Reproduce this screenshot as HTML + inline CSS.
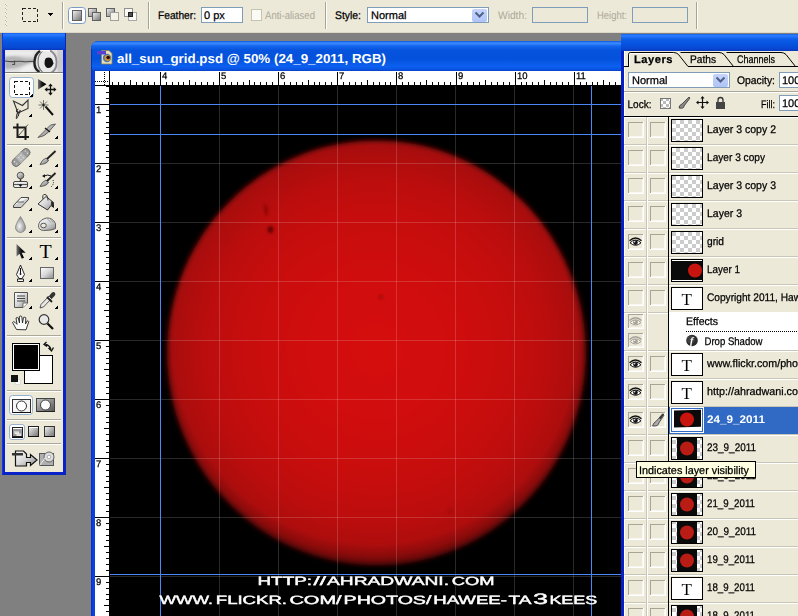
<!DOCTYPE html>
<html><head><meta charset="utf-8"><title>Photoshop</title>
<style>html,body{margin:0;padding:0;background:#808080;overflow:hidden}body{width:798px;height:616px;position:relative}svg{display:block;position:absolute;left:0;top:0}</style>
</head><body>
<svg width="798" height="616" viewBox="0 0 798 616" font-family="Liberation Sans, sans-serif" shape-rendering="crispEdges" text-rendering="geometricPrecision">
<defs>
<linearGradient id="tb" x1="0" y1="0" x2="0" y2="1">
<stop offset="0" stop-color="#1060F0"/><stop offset="0.1" stop-color="#2C7CFF"/><stop offset="0.3" stop-color="#0C5EEA"/><stop offset="0.6" stop-color="#0652DE"/><stop offset="0.85" stop-color="#0848D2"/><stop offset="1" stop-color="#0838C0"/>
</linearGradient>
<linearGradient id="tb2" x1="0" y1="0" x2="0" y2="1">
<stop offset="0" stop-color="#0A58E0"/><stop offset="0.07" stop-color="#3E8EFF"/><stop offset="0.17" stop-color="#1464EE"/><stop offset="0.3" stop-color="#0654DE"/><stop offset="0.6" stop-color="#0452DC"/><stop offset="0.85" stop-color="#0C60F0"/><stop offset="0.95" stop-color="#0A52E2"/><stop offset="1" stop-color="#0840C0"/>
</linearGradient>
<radialGradient id="sun" gradientUnits="userSpaceOnUse" cx="376.5" cy="350" r="212">
<stop offset="0" stop-color="#D5110C"/><stop offset="0.35" stop-color="#D0100B"/><stop offset="0.62" stop-color="#C70F0B"/><stop offset="0.8" stop-color="#BC0E0A"/><stop offset="0.92" stop-color="#AE0C09"/><stop offset="1" stop-color="#A00B08"/>
</radialGradient>
<filter id="sunbl" filterUnits="userSpaceOnUse" x="140" y="110" width="480" height="490"><feGaussianBlur stdDeviation="2.6"/></filter>
<linearGradient id="gbtn" x1="0" y1="0" x2="1" y2="1">
<stop offset="0" stop-color="#F4F4F4"/><stop offset="1" stop-color="#707070"/>
</linearGradient>
<linearGradient id="ddb" x1="0" y1="0" x2="0" y2="1">
<stop offset="0" stop-color="#C6D4FC"/><stop offset="1" stop-color="#B0C4F8"/>
</linearGradient>
<pattern id="chk" x="0" y="0" width="8" height="8" patternUnits="userSpaceOnUse">
<rect width="8" height="8" fill="#fff"/><rect width="4" height="4" fill="#CCC"/><rect x="4" y="4" width="4" height="4" fill="#CCC"/>
</pattern>
<pattern id="chkS" x="660" y="98" width="6" height="6" patternUnits="userSpaceOnUse"><rect width="6" height="6" fill="#fff"/><rect width="3" height="3" fill="#BBB"/><rect x="3" y="3" width="3" height="3" fill="#BBB"/></pattern>
<linearGradient id="hdr" x1="0" y1="0" x2="0" y2="1"><stop offset="0" stop-color="#E4E4E4"/><stop offset="0.5" stop-color="#D0D0D0"/><stop offset="1" stop-color="#E6E6E6"/></linearGradient>
<linearGradient id="arr" x1="0" y1="0" x2="1" y2="0"><stop offset="0" stop-color="#777"/><stop offset="0.5" stop-color="#111"/><stop offset="1" stop-color="#000"/></linearGradient>
<linearGradient id="gbtn2" x1="0" y1="0" x2="1" y2="1"><stop offset="0" stop-color="#FFFFFF"/><stop offset="0.5" stop-color="#D8D8D8"/><stop offset="1" stop-color="#8A8A8A"/></linearGradient>
<linearGradient id="gdk" x1="0" y1="0" x2="1" y2="1"><stop offset="0" stop-color="#C8C8C8"/><stop offset="1" stop-color="#555"/></linearGradient>
<radialGradient id="drop" cx="0.4" cy="0.6" r="0.6"><stop offset="0" stop-color="#F4F4F4"/><stop offset="1" stop-color="#8C8C8C"/></radialGradient>
<radialGradient id="limb" gradientUnits="userSpaceOnUse" cx="376.5" cy="353" r="221" fx="356.5" fy="222"><stop offset="0.915" stop-color="#000" stop-opacity="0"/><stop offset="0.948" stop-color="#000" stop-opacity="0.16"/><stop offset="0.974" stop-color="#000" stop-opacity="0.42"/><stop offset="0.99" stop-color="#000" stop-opacity="0.7"/><stop offset="1" stop-color="#000" stop-opacity="0.9"/></radialGradient>
<clipPath id="hc"><rect x="5" y="50" width="58" height="22"/></clipPath>
<clipPath id="cv"><rect x="110" y="86" width="511" height="530"/></clipPath>
<filter id="bl2" x="-0.5" y="-0.5" width="2" height="2"><feGaussianBlur stdDeviation="1"/></filter>
<filter id="bl" x="-1" y="-1" width="3" height="3"><feGaussianBlur stdDeviation="1.4"/></filter>
</defs>
<rect x="0" y="0" width="798" height="616" fill="#808080" />
<g id="optionsbar">
<rect x="0" y="0" width="798" height="33" fill="#ECE9D8" />
<rect x="0" y="32" width="798" height="1" fill="#DAD7C6" />
<rect x="5" y="4" width="2" height="2" fill="#FFFFFF" />
<rect x="5" y="4" width="1" height="1" fill="#B5B2A2" />
<rect x="6" y="5" width="1" height="1" fill="#B5B2A2" />
<rect x="5" y="8" width="2" height="2" fill="#FFFFFF" />
<rect x="5" y="8" width="1" height="1" fill="#B5B2A2" />
<rect x="6" y="9" width="1" height="1" fill="#B5B2A2" />
<rect x="5" y="12" width="2" height="2" fill="#FFFFFF" />
<rect x="5" y="12" width="1" height="1" fill="#B5B2A2" />
<rect x="6" y="13" width="1" height="1" fill="#B5B2A2" />
<rect x="5" y="16" width="2" height="2" fill="#FFFFFF" />
<rect x="5" y="16" width="1" height="1" fill="#B5B2A2" />
<rect x="6" y="17" width="1" height="1" fill="#B5B2A2" />
<rect x="5" y="20" width="2" height="2" fill="#FFFFFF" />
<rect x="5" y="20" width="1" height="1" fill="#B5B2A2" />
<rect x="6" y="21" width="1" height="1" fill="#B5B2A2" />
<rect x="5" y="24" width="2" height="2" fill="#FFFFFF" />
<rect x="5" y="24" width="1" height="1" fill="#B5B2A2" />
<rect x="6" y="25" width="1" height="1" fill="#B5B2A2" />
<rect x="22.5" y="8.5" width="15" height="13" fill="none" stroke="#222" stroke-dasharray="3 2"/>
<path d="M47 13h6l-3 3z" fill="#000"/>
<rect x="62" y="2" width="1" height="27" fill="#A7A493" />
<rect x="63" y="2" width="1" height="27" fill="#FFFFFF" />
<rect x="68.5" y="7.5" width="17" height="16" rx="3" fill="#FFFFFF" stroke="#7A98C4" shape-rendering="geometricPrecision"/>
<rect x="72.500" y="10.500" width="9" height="10" fill="url(#gbtn)" stroke="#606060"/>
<rect x="88.5" y="8.5" width="8" height="8" fill="url(#gbtn)" stroke="#606060"/>
<rect x="92.5" y="12.5" width="8" height="8" fill="url(#gbtn)" stroke="#606060"/>
<rect x="106.5" y="8.5" width="8" height="8" fill="url(#gbtn)" stroke="#606060"/>
<rect x="110.5" y="12.5" width="8" height="8" fill="#F4F2E6" stroke="#A0A0A0"/>
<rect x="124.5" y="8.5" width="8" height="8" fill="#FBFAF4" stroke="#909090"/>
<rect x="128.5" y="12.5" width="8" height="8" fill="#FBFAF4" stroke="#A8A8A8"/>
<rect x="128.5" y="12.5" width="4" height="4" fill="#505050" stroke="#202020"/>
<rect x="148" y="2" width="1" height="27" fill="#A7A493" />
<rect x="149" y="2" width="1" height="27" fill="#FFFFFF" />
<text x="158" y="19" font-size="11" fill="#000" textLength="38" lengthAdjust="spacingAndGlyphs" stroke="#000" stroke-width="0.25" >Feather:</text>
<rect x="201.5" y="7.5" width="41" height="15" fill="#fff" stroke="#7F9DB9"/>
<text x="204" y="19" font-size="11" fill="#000" stroke="#000" stroke-width="0.25" >0 px</text>
<rect x="251.5" y="9.5" width="10" height="11" fill="#FBFAF5" stroke="#C6C3B0"/>
<text x="265" y="19" font-size="11" fill="#ACA899" textLength="50" lengthAdjust="spacingAndGlyphs" >Anti-aliased</text>
<rect x="325" y="2" width="1" height="27" fill="#A7A493" />
<rect x="326" y="2" width="1" height="27" fill="#FFFFFF" />
<text x="335" y="19" font-size="11" fill="#000" textLength="26" lengthAdjust="spacingAndGlyphs" stroke="#000" stroke-width="0.25" >Style:</text>
<rect x="367.5" y="7.5" width="121" height="15" fill="#fff" stroke="#7F9DB9"/>
<text x="371" y="19" font-size="11" fill="#000" stroke="#000" stroke-width="0.25" >Normal</text>
<rect x="472" y="9" width="15" height="13" rx="2" fill="url(#ddb)" shape-rendering="geometricPrecision"/>
<path d="M475.5 12.5l4 4 4-4" fill="none" stroke="#4D6185" stroke-width="2" shape-rendering="geometricPrecision"/>
<text x="498" y="19" font-size="11" fill="#ACA899" textLength="29" lengthAdjust="spacingAndGlyphs" >Width:</text>
<rect x="532.5" y="7.5" width="55" height="15" fill="#ECE9D8" stroke="#7F9DB9"/>
<text x="597" y="19" font-size="11" fill="#ACA899" textLength="30" lengthAdjust="spacingAndGlyphs" >Height:</text>
<rect x="632.5" y="7.5" width="55" height="15" fill="#ECE9D8" stroke="#7F9DB9"/>
<rect x="696" y="2" width="1" height="27" fill="#A7A493" />
<rect x="697" y="2" width="1" height="27" fill="#FFFFFF" />
</g>
<g id="toolbox">
<rect x="2" y="33" width="64" height="442" fill="#0A20CC" />
<rect x="2" y="33" width="64" height="17" fill="url(#tb)" />
<rect x="2" y="33" width="1" height="442" fill="#0A3CE0" />
<rect x="65" y="33" width="1" height="442" fill="#0628B8" />
<rect x="2" y="474" width="64" height="1" fill="#0628B8" />
<rect x="5" y="50" width="58" height="422" fill="#ECE9D8" />
<rect x="5" y="50" width="58" height="23" fill="url(#hdr)"/>
<g shape-rendering="geometricPrecision" clip-path="url(#hc)"><path d="M5 57q8-2 14 0t14 2l2 3q-8 1-14 4t-16 3z" fill="#B4B4B4" filter="url(#bl2)"/><path d="M5 51h28v5q-14-2-28 0z" fill="#EDEDED" filter="url(#bl2)"/><path d="M20 70q6-5 14-7v9h-14z" fill="#F0F0F0" filter="url(#bl2)"/><path d="M5 61q6 1 10 .5t8 0 11-.3" stroke="#4A4A4A" stroke-width="1.100" fill="none"/><path d="M14.500 60.500v4h-2.500" stroke="#555" stroke-width="1.200" fill="none"/><ellipse cx="46" cy="61.500" rx="10" ry="11" fill="#E9E9E9"/><path d="M40 51q-5 3-5.500 10.500t5 10.500" fill="none" stroke="#222" stroke-width="2.400"/><path d="M43 50.500q-5 4-5 11t4.500 10.500" fill="none" stroke="#777" stroke-width="1.200"/><path d="M50 50.500q6 3 6.500 11t-5 11" fill="none" stroke="#8A8A8A" stroke-width="1.800"/><path d="M46 58q5-1.500 6.500 2l1 3.500q-2 5-6 4.500-3-1.500-3-5t1.500-5z" fill="#141414"/><path d="M57.500 50v23h5.500v-23z" fill="#C4C4C4" opacity="0.700"/><path d="M41 51q4-1.500 9 0" stroke="#fff" stroke-width="1.500" fill="none"/></g>
<rect x="5" y="72" width="58" height="1" fill="#7C7A6C" />
<rect x="5" y="73" width="58" height="1" fill="#FFFFFF" />
<rect x="9.500" y="77.500" width="24" height="20" rx="3" fill="#FFFFFF" stroke="#98B0D0" shape-rendering="geometricPrecision"/>
<rect x="14.500" y="81.500" width="15" height="13" fill="none" stroke="#111" stroke-dasharray="3 2"/>
<g shape-rendering="geometricPrecision">
<path d="M38 79v10.500l8.500-5.200z" fill="url(#arr)"/><path d="M50.500 85v9M46 89.500h9" stroke="#111" stroke-width="1.300"/><path d="M50.500 83.500l2.300 2.800h-4.600zM50.500 95.500l2.300-2.800h-4.600zM44.500 89.500l2.800-2.300v4.600zM56.500 89.500l-2.800-2.300v4.600z" fill="#111"/>
<path d="M13.500 101l4.500 12 10-4.500v-8.500l-5.500 5.500z" fill="none" stroke="#333" stroke-width="1.100"/><path d="M18.500 109q-3 1-2 3t3-1-1 4-2 1 2 0" stroke="#222" fill="none" stroke-width="0.900"/>
<path d="M45.500 106.500l7.500 8.500" stroke="#111" stroke-width="2"/><path d="M43.500 100v10M38.500 105h10M40 101.500l7 7M47 101.500l-7 7" stroke="#444" stroke-width="0.700"/><circle cx="43.500" cy="105" r="1.200" fill="#222"/>
<path d="M17.500 123.500v13.500h11.500M13 127.500h12.500v12.500" fill="none" stroke="#1A1A1A" stroke-width="2"/><path d="M17 137.500l11-13" stroke="#333" stroke-width="0.800"/>
<path d="M38 137.500q7-1 11-6l6.500-7.500-5 1-8 8z" fill="url(#gbtn)" stroke="#333" stroke-width="0.700"/><path d="M45 128l5 4" stroke="#111" stroke-width="1.300"/>
<g transform="rotate(-45 21 157.500)"><rect x="10" y="153.500" width="22" height="8" rx="4" fill="#9A9A9A" stroke="#666" stroke-width="0.800"/><rect x="17" y="153.500" width="8" height="8" fill="#B5B5B5"/><circle cx="13.500" cy="156" r="0.600" fill="#eee"/><circle cx="13.500" cy="159" r="0.600" fill="#eee"/><circle cx="28.500" cy="156" r="0.600" fill="#eee"/><circle cx="28.500" cy="159" r="0.600" fill="#eee"/><circle cx="19.500" cy="156" r="0.600" fill="#eee"/><circle cx="22.500" cy="159" r="0.600" fill="#eee"/><circle cx="22.500" cy="156" r="0.600" fill="#eee"/><circle cx="19.500" cy="159" r="0.600" fill="#eee"/></g>
<path d="M40 164.500q2-5 6-6.500l2.500 2q-1 4-8.500 4.500z" fill="url(#gbtn)" stroke="#333" stroke-width="0.700"/><path d="M47 159l8.500-8" stroke="#222" stroke-width="1.800"/>
<circle cx="20.500" cy="175.500" r="3.300" fill="url(#gbtn)" stroke="#333" stroke-width="0.800"/><path d="M20.500 179v3" stroke="#333" stroke-width="1.500"/><rect x="13.500" y="181.500" width="14" height="6" rx="1.500" fill="#EEE" stroke="#333" stroke-width="0.900"/><path d="M14 184.500h13" stroke="#555" stroke-width="1.200"/><path d="M18.500 184.500h4l-2 2.500z" fill="#111"/>
<path d="M40 186.500q2-5 6-6.500l2.500 2q-1 4-8.500 4.500z" fill="url(#gbtn)" stroke="#333" stroke-width="0.700"/><path d="M47 181l8.500-8" stroke="#222" stroke-width="1.800"/><path d="M44 176q4-2 7 0" fill="none" stroke="#111" stroke-width="1"/><path d="M42 176l3-1.800v3.600z" fill="#111"/><path d="M53 180q1.500 4-2 7" fill="none" stroke="#111" stroke-width="1" stroke-dasharray="1 1.200"/>
<path d="M13.500 205.500l7.500-8h7.500l-7.500 8z" fill="#F4F4F4" stroke="#333" stroke-width="0.900"/><path d="M13.500 205.500v2h7.500l7.500-8v-2" fill="#CCC" stroke="#333" stroke-width="0.900"/><path d="M17 202h7" stroke="#555" stroke-width="0.800"/>
<path d="M38 204l8-7.500 7.500 6-6 7.500z" fill="url(#gbtn2)" stroke="#222" stroke-width="0.900"/><path d="M43 199q-1-5 2-4.500t3 6" fill="none" stroke="#222" stroke-width="0.900"/><path d="M51 201.500q3 0 3 3.500v3l-2.500-1.500z" fill="#222"/>
<path d="M20.500 216.500q-5 8-5 11a5 5 0 0 0 10 0q0-3-5-11z" fill="url(#drop)" stroke="#777" stroke-width="0.700"/>
<path d="M38.500 226q0-6 8-8 6-.5 9 5.500v5q-3 2-12 2-5-.500-5-4.500z" fill="url(#gbtn2)" stroke="#555" stroke-width="0.900"/><ellipse cx="43.500" cy="225.500" rx="2.800" ry="2.300" fill="#ECE9D8" stroke="#444" stroke-width="0.900"/><path d="M47 218.500l4 4M49.500 218l3.500 4" stroke="#888" stroke-width="0.700"/>
<path d="M16.500 244v12.500l3-2.800 2.300 5 2.200-1-2.300-5h4z" fill="url(#arr)"/>
<path d="M20.500 265l-4 9.500 2.500 4h3l2.500-4zM17.500 279h6v2.500h-6z" fill="#F8F8F8" stroke="#111" stroke-width="0.900"/><path d="M20.500 268v5.500" stroke="#111"/><circle cx="20.500" cy="274" r="0.900" fill="#111"/>
<rect x="40.500" y="267.500" width="13" height="11" fill="url(#gbtn2)" stroke="#666"/>
<path d="M14.500 292.500h13v10.500l-4.500 4.500h-8.500z" fill="url(#gbtn2)" stroke="#555"/><path d="M27.500 303h-4.500v4.500" fill="#fff" stroke="#555" stroke-width="0.800"/><path d="M17 296h8M17 298.500h8M17 301h8" stroke="#444" stroke-width="1"/>
<path d="M40 308l1-3.500 8-8.500 2.500 2.500-8 8.500z" fill="#E8E8E8" stroke="#333" stroke-width="0.800"/><path d="M47 297l5 5" stroke="#222" stroke-width="1.800"/><path d="M49 296l3-3.500q2-1 3 .5t-.5 3l-3 3z" fill="#333"/>
<path d="M16.500 329.500l-4-7q1-1.500 2.500-.2l2 2-1-6.300q1.300-1 2.300 0l1.200 5-.2-6.500q1.500-1 2.500 0l.7 6.500 1-5.500q1.500-.800 2.300.300l-.3 6.200 1.500-3q1.300-.5 1.800.6l-2.800 8.200z" fill="#FAFAFA" stroke="#222" stroke-width="0.900"/>
<circle cx="44" cy="319.500" r="4.800" fill="#E8E8E8" stroke="#333" stroke-width="1.200"/><path d="M47.500 323.500l5.500 5.500" stroke="#111" stroke-width="2.300"/>
</g>
<text x="39.5" y="257.5" font-size="20" fill="#000" font-family="Liberation Serif, serif">T</text>
<path d="M33 97v-4l-4 4z" fill="#000"/>
<path d="M32 117v-4l-4 4z" fill="#000"/>
<path d="M58 139v-4l-4 4z" fill="#000"/>
<path d="M32 167v-4l-4 4z" fill="#000"/>
<path d="M58 167v-4l-4 4z" fill="#000"/>
<path d="M32 189v-4l-4 4z" fill="#000"/>
<path d="M58 189v-4l-4 4z" fill="#000"/>
<path d="M32 211v-4l-4 4z" fill="#000"/>
<path d="M58 211v-4l-4 4z" fill="#000"/>
<path d="M32 233v-4l-4 4z" fill="#000"/>
<path d="M58 233v-4l-4 4z" fill="#000"/>
<path d="M32 260v-4l-4 4z" fill="#000"/>
<path d="M58 260v-4l-4 4z" fill="#000"/>
<path d="M32 282v-4l-4 4z" fill="#000"/>
<path d="M58 282v-4l-4 4z" fill="#000"/>
<path d="M32 309v-4l-4 4z" fill="#000"/>
<path d="M58 309v-4l-4 4z" fill="#000"/>
<rect x="7" y="144" width="54" height="1" fill="#ACA899" />
<rect x="7" y="145" width="54" height="1" fill="#FFFFFF" />
<rect x="7" y="237" width="54" height="1" fill="#ACA899" />
<rect x="7" y="238" width="54" height="1" fill="#FFFFFF" />
<rect x="7" y="286" width="54" height="1" fill="#ACA899" />
<rect x="7" y="287" width="54" height="1" fill="#FFFFFF" />
<rect x="7" y="335" width="54" height="1" fill="#ACA899" />
<rect x="7" y="336" width="54" height="1" fill="#FFFFFF" />
<rect x="7" y="390" width="54" height="1" fill="#ACA899" />
<rect x="7" y="391" width="54" height="1" fill="#FFFFFF" />
<rect x="7" y="419" width="54" height="1" fill="#ACA899" />
<rect x="7" y="420" width="54" height="1" fill="#FFFFFF" />
<rect x="7" y="443" width="54" height="1" fill="#ACA899" />
<rect x="7" y="444" width="54" height="1" fill="#FFFFFF" />
<rect x="24.500" y="355.500" width="28" height="28" fill="#FFFFFF" stroke="#000"/>
<rect x="12.500" y="343.500" width="27" height="27" fill="#FFFFFF" stroke="#000"/>
<rect x="14" y="345" width="24" height="24" fill="#000" />
<rect x="15.500" y="379.500" width="5" height="5" fill="#fff" stroke="#ddd"/><rect x="11" y="375" width="7" height="7" fill="#111"/>
<path d="M45.500 344.500q4 .5 5.500 5M46.500 342l-2.500 2.500 3 2M48.500 348l3 3 2-3.500" fill="none" stroke="#111" stroke-width="1.300" shape-rendering="geometricPrecision"/>
<rect x="9.500" y="395.500" width="23" height="19" rx="3" fill="#FFFFFF" stroke="#98B0D0" shape-rendering="geometricPrecision"/>
<rect x="12.500" y="399.500" width="18" height="13" fill="#F4F4F4" stroke="#333"/><rect x="13" y="412" width="18" height="1" fill="#111"/><circle cx="21.500" cy="406" r="5" fill="#fff" stroke="#333" shape-rendering="geometricPrecision"/>
<rect x="36.500" y="398.500" width="18" height="13" fill="url(#gdk)" stroke="#444"/><rect x="37" y="411" width="18" height="1" fill="#222"/><circle cx="45.500" cy="405" r="5" fill="#fff" stroke="#444" shape-rendering="geometricPrecision"/>
<rect x="9.500" y="424.500" width="15" height="15" rx="2.500" fill="#FFFFFF" stroke="#98B0D0" shape-rendering="geometricPrecision"/>
<rect x="12.500" y="427.500" width="10" height="9" fill="#9A9A9A" stroke="#222"/><rect x="13" y="428" width="9" height="1" fill="#fff"/><rect x="14.500" y="431.500" width="4" height="2" fill="#ddd" stroke="#eee" stroke-width="0.500"/><rect x="16.500" y="433.500" width="4" height="2" fill="#ddd" stroke="#eee" stroke-width="0.500"/><rect x="12" y="437" width="11" height="1" fill="#111"/>
<rect x="28.500" y="426.500" width="10" height="10" fill="url(#gbtn)" stroke="#222"/><rect x="29" y="427" width="9" height="1" fill="#fff"/><rect x="28" y="436" width="11" height="1" fill="#111"/>
<rect x="44.500" y="426.500" width="10" height="10" fill="url(#gbtn)" stroke="#333"/><rect x="44" y="436" width="11" height="1" fill="#111"/>
<g shape-rendering="geometricPrecision"><path d="M15.500 451h8l3 3v3.500h4v-3l6.500 5.500-6.500 5.500v-3h-4v3.500h-11z" fill="url(#gbtn2)" stroke="#111" stroke-width="1.200"/><rect x="12" y="453" width="11" height="2.500" fill="#333"/><rect x="39.500" y="453.500" width="14" height="12" fill="#B0B0B0" stroke="#555"/><circle cx="49" cy="457" r="5" fill="#DDD" stroke="#666"/><circle cx="49" cy="457" r="1.800" fill="#fff" stroke="#888" stroke-width="0.600"/><path d="M39.500 465.500l6-8" stroke="#eee"/></g>
</g>
<g id="docwin">
<path d="M91 616V49q0-8 8-8H640V616z" fill="#0A3FE0" shape-rendering="geometricPrecision"/>
<path d="M91 71V49q0-8 8-8H640V71z" fill="url(#tb2)" shape-rendering="geometricPrecision"/>
<rect x="91" y="49" width="1" height="567" fill="#0831C0" />
<g shape-rendering="geometricPrecision"><path d="M101.500 50.500h7.500l3 3v10.500h-10.500z" fill="#E6DFB8" stroke="#8A805A" stroke-width="0.800"/><circle cx="107" cy="58" r="4.200" fill="#4A78B8"/><circle cx="107.500" cy="58" r="3" fill="#D09030"/><circle cx="108.200" cy="57.500" r="1.800" fill="#201008"/><rect x="97" y="51" width="9" height="3.500" fill="#5A3FD0"/></g>
<text x="117" y="63" font-size="13" fill="#fff" textLength="269" lengthAdjust="spacingAndGlyphs" font-weight="bold">all_sun_grid.psd @ 50% (24_9_2011, RGB)</text>
<rect x="95" y="71" width="527" height="15" fill="#fff" />
<rect x="95" y="71" width="15" height="545" fill="#fff" />
<rect x="95" y="85" width="527" height="1" fill="#000" />
<rect x="109" y="71" width="1" height="545" fill="#000" />
<rect x="95" y="81" width="1" height="1" fill="#000" />
<rect x="104" y="72" width="1" height="1" fill="#000" />
<rect x="97" y="81" width="1" height="1" fill="#000" />
<rect x="104" y="74" width="1" height="1" fill="#000" />
<rect x="99" y="81" width="1" height="1" fill="#000" />
<rect x="104" y="76" width="1" height="1" fill="#000" />
<rect x="101" y="81" width="1" height="1" fill="#000" />
<rect x="104" y="78" width="1" height="1" fill="#000" />
<rect x="103" y="81" width="1" height="1" fill="#000" />
<rect x="104" y="80" width="1" height="1" fill="#000" />
<rect x="105" y="81" width="1" height="1" fill="#000" />
<rect x="104" y="82" width="1" height="1" fill="#000" />
<rect x="107" y="81" width="1" height="1" fill="#000" />
<rect x="104" y="84" width="1" height="1" fill="#000" />
<rect x="110" y="86" width="512" height="530" fill="#000" />
<g clip-path="url(#cv)" shape-rendering="geometricPrecision">
<ellipse cx="376.5" cy="353" rx="209.5" ry="212.5" fill="url(#sun)" filter="url(#sunbl)"/>
<circle cx="376.5" cy="353" r="223" fill="url(#limb)"/>
<g filter="url(#bl)"><ellipse cx="266" cy="210" rx="1.800" ry="6" fill="#7A0808" opacity="0.650" transform="rotate(-8 266 210)"/><ellipse cx="270.500" cy="229.500" rx="2.800" ry="3.500" fill="#5A0606" opacity="0.900"/><ellipse cx="381" cy="297" rx="1.500" ry="1.800" fill="#800808"/><ellipse cx="450" cy="511" rx="1.500" ry="1.500" fill="#900A0A"/></g>
</g>
<rect x="160" y="86" width="1" height="530" fill="#FFFFFF" opacity="0.16"/>
<rect x="219" y="86" width="1" height="530" fill="#FFFFFF" opacity="0.16"/>
<rect x="278" y="86" width="1" height="530" fill="#FFFFFF" opacity="0.16"/>
<rect x="337" y="86" width="1" height="530" fill="#FFFFFF" opacity="0.16"/>
<rect x="396" y="86" width="1" height="530" fill="#FFFFFF" opacity="0.16"/>
<rect x="455" y="86" width="1" height="530" fill="#FFFFFF" opacity="0.16"/>
<rect x="514" y="86" width="1" height="530" fill="#FFFFFF" opacity="0.16"/>
<rect x="573" y="86" width="1" height="530" fill="#FFFFFF" opacity="0.16"/>
<rect x="110" y="104" width="512" height="1" fill="#FFFFFF" opacity="0.16"/>
<rect x="110" y="163" width="512" height="1" fill="#FFFFFF" opacity="0.16"/>
<rect x="110" y="222" width="512" height="1" fill="#FFFFFF" opacity="0.16"/>
<rect x="110" y="281" width="512" height="1" fill="#FFFFFF" opacity="0.16"/>
<rect x="110" y="340" width="512" height="1" fill="#FFFFFF" opacity="0.16"/>
<rect x="110" y="399" width="512" height="1" fill="#FFFFFF" opacity="0.16"/>
<rect x="110" y="458" width="512" height="1" fill="#FFFFFF" opacity="0.16"/>
<rect x="110" y="517" width="512" height="1" fill="#FFFFFF" opacity="0.16"/>
<rect x="110" y="576" width="512" height="1" fill="#FFFFFF" opacity="0.16"/>
<rect x="160" y="86" width="1" height="530" fill="#4A88F8" />
<rect x="591" y="86" width="1" height="530" fill="#4A88F8" />
<rect x="110" y="104" width="512" height="1" fill="#4A88F8" />
<rect x="110" y="134" width="512" height="1" fill="#4A88F8" />
<rect x="110" y="574" width="512" height="1" fill="#4A88F8" />
<rect x="112" y="82" width="1" height="3" fill="#000" />
<rect x="118" y="82" width="1" height="3" fill="#000" />
<rect x="124" y="82" width="1" height="3" fill="#000" />
<rect x="130" y="80" width="1" height="5" fill="#000" />
<rect x="136" y="82" width="1" height="3" fill="#000" />
<rect x="142" y="82" width="1" height="3" fill="#000" />
<rect x="148" y="82" width="1" height="3" fill="#000" />
<rect x="154" y="82" width="1" height="3" fill="#000" />
<rect x="160" y="72" width="1" height="13" fill="#000" />
<text x="162" y="79" font-size="9.5" fill="#000" stroke="#000" stroke-width="0.25" >4</text>
<rect x="166" y="82" width="1" height="3" fill="#000" />
<rect x="172" y="82" width="1" height="3" fill="#000" />
<rect x="178" y="82" width="1" height="3" fill="#000" />
<rect x="183" y="82" width="1" height="3" fill="#000" />
<rect x="189" y="80" width="1" height="5" fill="#000" />
<rect x="195" y="82" width="1" height="3" fill="#000" />
<rect x="201" y="82" width="1" height="3" fill="#000" />
<rect x="207" y="82" width="1" height="3" fill="#000" />
<rect x="213" y="82" width="1" height="3" fill="#000" />
<rect x="219" y="72" width="1" height="13" fill="#000" />
<text x="221" y="79" font-size="9.5" fill="#000" stroke="#000" stroke-width="0.25" >5</text>
<rect x="225" y="82" width="1" height="3" fill="#000" />
<rect x="231" y="82" width="1" height="3" fill="#000" />
<rect x="237" y="82" width="1" height="3" fill="#000" />
<rect x="243" y="82" width="1" height="3" fill="#000" />
<rect x="249" y="80" width="1" height="5" fill="#000" />
<rect x="254" y="82" width="1" height="3" fill="#000" />
<rect x="260" y="82" width="1" height="3" fill="#000" />
<rect x="266" y="82" width="1" height="3" fill="#000" />
<rect x="272" y="82" width="1" height="3" fill="#000" />
<rect x="278" y="72" width="1" height="13" fill="#000" />
<text x="280" y="79" font-size="9.5" fill="#000" stroke="#000" stroke-width="0.25" >6</text>
<rect x="284" y="82" width="1" height="3" fill="#000" />
<rect x="290" y="82" width="1" height="3" fill="#000" />
<rect x="296" y="82" width="1" height="3" fill="#000" />
<rect x="302" y="82" width="1" height="3" fill="#000" />
<rect x="308" y="80" width="1" height="5" fill="#000" />
<rect x="314" y="82" width="1" height="3" fill="#000" />
<rect x="319" y="82" width="1" height="3" fill="#000" />
<rect x="325" y="82" width="1" height="3" fill="#000" />
<rect x="331" y="82" width="1" height="3" fill="#000" />
<rect x="337" y="72" width="1" height="13" fill="#000" />
<text x="339" y="79" font-size="9.5" fill="#000" stroke="#000" stroke-width="0.25" >7</text>
<rect x="343" y="82" width="1" height="3" fill="#000" />
<rect x="349" y="82" width="1" height="3" fill="#000" />
<rect x="355" y="82" width="1" height="3" fill="#000" />
<rect x="361" y="82" width="1" height="3" fill="#000" />
<rect x="367" y="80" width="1" height="5" fill="#000" />
<rect x="373" y="82" width="1" height="3" fill="#000" />
<rect x="379" y="82" width="1" height="3" fill="#000" />
<rect x="385" y="82" width="1" height="3" fill="#000" />
<rect x="390" y="82" width="1" height="3" fill="#000" />
<rect x="396" y="72" width="1" height="13" fill="#000" />
<text x="398" y="79" font-size="9.5" fill="#000" stroke="#000" stroke-width="0.25" >8</text>
<rect x="402" y="82" width="1" height="3" fill="#000" />
<rect x="408" y="82" width="1" height="3" fill="#000" />
<rect x="414" y="82" width="1" height="3" fill="#000" />
<rect x="420" y="82" width="1" height="3" fill="#000" />
<rect x="426" y="80" width="1" height="5" fill="#000" />
<rect x="432" y="82" width="1" height="3" fill="#000" />
<rect x="438" y="82" width="1" height="3" fill="#000" />
<rect x="444" y="82" width="1" height="3" fill="#000" />
<rect x="450" y="82" width="1" height="3" fill="#000" />
<rect x="456" y="72" width="1" height="13" fill="#000" />
<text x="458" y="79" font-size="9.5" fill="#000" stroke="#000" stroke-width="0.25" >9</text>
<rect x="461" y="82" width="1" height="3" fill="#000" />
<rect x="467" y="82" width="1" height="3" fill="#000" />
<rect x="473" y="82" width="1" height="3" fill="#000" />
<rect x="479" y="82" width="1" height="3" fill="#000" />
<rect x="485" y="80" width="1" height="5" fill="#000" />
<rect x="491" y="82" width="1" height="3" fill="#000" />
<rect x="497" y="82" width="1" height="3" fill="#000" />
<rect x="503" y="82" width="1" height="3" fill="#000" />
<rect x="509" y="82" width="1" height="3" fill="#000" />
<rect x="515" y="72" width="1" height="13" fill="#000" />
<text x="517" y="79" font-size="9.5" fill="#000" stroke="#000" stroke-width="0.25" >10</text>
<rect x="521" y="82" width="1" height="3" fill="#000" />
<rect x="526" y="82" width="1" height="3" fill="#000" />
<rect x="532" y="82" width="1" height="3" fill="#000" />
<rect x="538" y="82" width="1" height="3" fill="#000" />
<rect x="544" y="80" width="1" height="5" fill="#000" />
<rect x="550" y="82" width="1" height="3" fill="#000" />
<rect x="556" y="82" width="1" height="3" fill="#000" />
<rect x="562" y="82" width="1" height="3" fill="#000" />
<rect x="568" y="82" width="1" height="3" fill="#000" />
<rect x="574" y="72" width="1" height="13" fill="#000" />
<text x="576" y="79" font-size="9.5" fill="#000" stroke="#000" stroke-width="0.25" >11</text>
<rect x="580" y="82" width="1" height="3" fill="#000" />
<rect x="586" y="82" width="1" height="3" fill="#000" />
<rect x="592" y="82" width="1" height="3" fill="#000" />
<rect x="597" y="82" width="1" height="3" fill="#000" />
<rect x="603" y="80" width="1" height="5" fill="#000" />
<rect x="609" y="82" width="1" height="3" fill="#000" />
<rect x="615" y="82" width="1" height="3" fill="#000" />
<rect x="621" y="82" width="1" height="3" fill="#000" />
<rect x="106" y="86" width="3" height="1" fill="#000" />
<rect x="106" y="92" width="3" height="1" fill="#000" />
<rect x="106" y="98" width="3" height="1" fill="#000" />
<rect x="95" y="104" width="14" height="1" fill="#000" />
<text x="96" y="113" font-size="9.5" fill="#000" stroke="#000" stroke-width="0.25" >1</text>
<rect x="106" y="110" width="3" height="1" fill="#000" />
<rect x="106" y="116" width="3" height="1" fill="#000" />
<rect x="106" y="122" width="3" height="1" fill="#000" />
<rect x="106" y="127" width="3" height="1" fill="#000" />
<rect x="104" y="133" width="5" height="1" fill="#000" />
<rect x="106" y="139" width="3" height="1" fill="#000" />
<rect x="106" y="145" width="3" height="1" fill="#000" />
<rect x="106" y="151" width="3" height="1" fill="#000" />
<rect x="106" y="157" width="3" height="1" fill="#000" />
<rect x="95" y="163" width="14" height="1" fill="#000" />
<text x="96" y="172" font-size="9.5" fill="#000" stroke="#000" stroke-width="0.25" >2</text>
<rect x="106" y="169" width="3" height="1" fill="#000" />
<rect x="106" y="175" width="3" height="1" fill="#000" />
<rect x="106" y="181" width="3" height="1" fill="#000" />
<rect x="106" y="186" width="3" height="1" fill="#000" />
<rect x="104" y="192" width="5" height="1" fill="#000" />
<rect x="106" y="198" width="3" height="1" fill="#000" />
<rect x="106" y="204" width="3" height="1" fill="#000" />
<rect x="106" y="210" width="3" height="1" fill="#000" />
<rect x="106" y="216" width="3" height="1" fill="#000" />
<rect x="95" y="222" width="14" height="1" fill="#000" />
<text x="96" y="231" font-size="9.5" fill="#000" stroke="#000" stroke-width="0.25" >3</text>
<rect x="106" y="228" width="3" height="1" fill="#000" />
<rect x="106" y="234" width="3" height="1" fill="#000" />
<rect x="106" y="240" width="3" height="1" fill="#000" />
<rect x="106" y="245" width="3" height="1" fill="#000" />
<rect x="104" y="251" width="5" height="1" fill="#000" />
<rect x="106" y="257" width="3" height="1" fill="#000" />
<rect x="106" y="263" width="3" height="1" fill="#000" />
<rect x="106" y="269" width="3" height="1" fill="#000" />
<rect x="106" y="275" width="3" height="1" fill="#000" />
<rect x="95" y="281" width="14" height="1" fill="#000" />
<text x="96" y="290" font-size="9.5" fill="#000" stroke="#000" stroke-width="0.25" >4</text>
<rect x="106" y="287" width="3" height="1" fill="#000" />
<rect x="106" y="293" width="3" height="1" fill="#000" />
<rect x="106" y="299" width="3" height="1" fill="#000" />
<rect x="106" y="304" width="3" height="1" fill="#000" />
<rect x="104" y="310" width="5" height="1" fill="#000" />
<rect x="106" y="316" width="3" height="1" fill="#000" />
<rect x="106" y="322" width="3" height="1" fill="#000" />
<rect x="106" y="328" width="3" height="1" fill="#000" />
<rect x="106" y="334" width="3" height="1" fill="#000" />
<rect x="95" y="340" width="14" height="1" fill="#000" />
<text x="96" y="349" font-size="9.5" fill="#000" stroke="#000" stroke-width="0.25" >5</text>
<rect x="106" y="346" width="3" height="1" fill="#000" />
<rect x="106" y="352" width="3" height="1" fill="#000" />
<rect x="106" y="358" width="3" height="1" fill="#000" />
<rect x="106" y="363" width="3" height="1" fill="#000" />
<rect x="104" y="369" width="5" height="1" fill="#000" />
<rect x="106" y="375" width="3" height="1" fill="#000" />
<rect x="106" y="381" width="3" height="1" fill="#000" />
<rect x="106" y="387" width="3" height="1" fill="#000" />
<rect x="106" y="393" width="3" height="1" fill="#000" />
<rect x="95" y="399" width="14" height="1" fill="#000" />
<text x="96" y="408" font-size="9.5" fill="#000" stroke="#000" stroke-width="0.25" >6</text>
<rect x="106" y="405" width="3" height="1" fill="#000" />
<rect x="106" y="411" width="3" height="1" fill="#000" />
<rect x="106" y="417" width="3" height="1" fill="#000" />
<rect x="106" y="422" width="3" height="1" fill="#000" />
<rect x="104" y="428" width="5" height="1" fill="#000" />
<rect x="106" y="434" width="3" height="1" fill="#000" />
<rect x="106" y="440" width="3" height="1" fill="#000" />
<rect x="106" y="446" width="3" height="1" fill="#000" />
<rect x="106" y="452" width="3" height="1" fill="#000" />
<rect x="95" y="458" width="14" height="1" fill="#000" />
<text x="96" y="467" font-size="9.5" fill="#000" stroke="#000" stroke-width="0.25" >7</text>
<rect x="106" y="464" width="3" height="1" fill="#000" />
<rect x="106" y="470" width="3" height="1" fill="#000" />
<rect x="106" y="476" width="3" height="1" fill="#000" />
<rect x="106" y="481" width="3" height="1" fill="#000" />
<rect x="104" y="487" width="5" height="1" fill="#000" />
<rect x="106" y="493" width="3" height="1" fill="#000" />
<rect x="106" y="499" width="3" height="1" fill="#000" />
<rect x="106" y="505" width="3" height="1" fill="#000" />
<rect x="106" y="511" width="3" height="1" fill="#000" />
<rect x="95" y="517" width="14" height="1" fill="#000" />
<text x="96" y="526" font-size="9.5" fill="#000" stroke="#000" stroke-width="0.25" >8</text>
<rect x="106" y="523" width="3" height="1" fill="#000" />
<rect x="106" y="529" width="3" height="1" fill="#000" />
<rect x="106" y="535" width="3" height="1" fill="#000" />
<rect x="106" y="540" width="3" height="1" fill="#000" />
<rect x="104" y="546" width="5" height="1" fill="#000" />
<rect x="106" y="552" width="3" height="1" fill="#000" />
<rect x="106" y="558" width="3" height="1" fill="#000" />
<rect x="106" y="564" width="3" height="1" fill="#000" />
<rect x="106" y="570" width="3" height="1" fill="#000" />
<rect x="95" y="576" width="14" height="1" fill="#000" />
<text x="96" y="585" font-size="9.5" fill="#000" stroke="#000" stroke-width="0.25" >9</text>
<rect x="106" y="582" width="3" height="1" fill="#000" />
<rect x="106" y="588" width="3" height="1" fill="#000" />
<rect x="106" y="594" width="3" height="1" fill="#000" />
<rect x="106" y="599" width="3" height="1" fill="#000" />
<rect x="104" y="605" width="5" height="1" fill="#000" />
<rect x="106" y="611" width="3" height="1" fill="#000" />
<g id="caption" stroke="#fff" stroke-width="0.45" fill="#fff" font-size="12">
<text y="584.5"><tspan x="257.5" textLength="54.5" lengthAdjust="spacingAndGlyphs">HTTP:</tspan><tspan x="313.5" textLength="12.5" lengthAdjust="spacingAndGlyphs">//</tspan><tspan x="327" textLength="122" lengthAdjust="spacingAndGlyphs">AHRADWANI.</tspan><tspan x="451.8" textLength="42.8" lengthAdjust="spacingAndGlyphs">COM</tspan></text>
<text y="603.8"><tspan x="159.4" textLength="53.6" lengthAdjust="spacingAndGlyphs">WWW.</tspan><tspan x="215.8" textLength="71.2" lengthAdjust="spacingAndGlyphs">FLICKR.</tspan><tspan x="289.4" textLength="52.3" lengthAdjust="spacingAndGlyphs">COM/</tspan><tspan x="343.6" textLength="87.8" lengthAdjust="spacingAndGlyphs">PHOTOS/</tspan><tspan x="433.2" textLength="73.8" lengthAdjust="spacingAndGlyphs">HAWEE-</tspan><tspan x="508.6" textLength="22.9" lengthAdjust="spacingAndGlyphs">TA</tspan><tspan x="532.9" font-size="15" textLength="15.0" lengthAdjust="spacingAndGlyphs">3</tspan><tspan x="549.4" textLength="47.8" lengthAdjust="spacingAndGlyphs">KEES</tspan></text>
</g>
</g>
<g id="layers">
<rect x="621" y="34" width="177" height="582" fill="#0420C8" />
<rect x="621" y="34" width="177" height="17" fill="url(#tb)" />
<rect x="624" y="51" width="174" height="565" fill="#ECE9D8" />
<rect x="624" y="51" width="1" height="565" fill="#FFFFFF" />
<g shape-rendering="geometricPrecision">
<path d="M688 66.500H798M624 66.500h4" stroke="#000" stroke-width="1" fill="none"/>
<path d="M628.500 67v-12.500q0-2 2-2h43q3 0 5 2l9.500 12" fill="none" stroke="#000" stroke-width="1"/>
<path d="M629.500 66v-11.500q0-1 1-1h43" fill="none" stroke="#fff" stroke-width="1"/>
<path d="M680.500 52.500H719q3 0 5 2l9.500 12" fill="none" stroke="#000" stroke-width="1"/>
<path d="M726.500 52.500H781q3 0 5 2l9.500 12" fill="none" stroke="#000" stroke-width="1"/>
</g>
<text x="634" y="63" font-size="11" fill="#000" textLength="39" lengthAdjust="spacingAndGlyphs" stroke="#000" stroke-width="0.25" font-weight="bold" letter-spacing="0.5">Layers</text>
<text x="690" y="63" font-size="11" fill="#000" textLength="26" lengthAdjust="spacingAndGlyphs" stroke="#000" stroke-width="0.25" >Paths</text>
<text x="737" y="63" font-size="11" fill="#000" textLength="38" lengthAdjust="spacingAndGlyphs" stroke="#000" stroke-width="0.25" >Channels</text>
<rect x="628.500" y="72.500" width="101" height="15" fill="#fff" stroke="#7F9DB9"/>
<text x="632" y="84" font-size="11" fill="#000" stroke="#000" stroke-width="0.25" >Normal</text>
<rect x="713" y="74" width="15" height="13" rx="2" fill="url(#ddb)" shape-rendering="geometricPrecision"/>
<path d="M716.500 77.500l4 4 4-4" fill="none" stroke="#4D6185" stroke-width="2" shape-rendering="geometricPrecision"/>
<text x="737" y="84" font-size="11" fill="#000" textLength="38" lengthAdjust="spacingAndGlyphs" stroke="#000" stroke-width="0.25" >Opacity:</text>
<rect x="779.500" y="72.500" width="30" height="15" fill="#fff" stroke="#7F9DB9"/>
<text x="782" y="84" font-size="11" fill="#000" stroke="#000" stroke-width="0.25" >100</text>
<rect x="624" y="91" width="174" height="1" fill="#ACA899" />
<rect x="624" y="92" width="174" height="1" fill="#fff" />
<text x="627.5" y="108" font-size="11" fill="#000" textLength="24" lengthAdjust="spacingAndGlyphs" stroke="#000" stroke-width="0.25" >Lock:</text>
<rect x="660.500" y="98.500" width="10" height="10" fill="url(#chkS)" stroke="#777"/>
<g shape-rendering="geometricPrecision"><path d="M679 108q0-3 3-4l7-7 1 1-6 8q0 3-5 2z" fill="#888" stroke="#333" stroke-width="0.800"/><path d="M702.500 97v11M697 102.500h11" stroke="#111" stroke-width="1.200"/><path d="M702.500 96l2 2.500h-4zM702.500 109l2-2.500h-4zM696 102.500l2.500-2v4zM709 102.500l-2.500-2v4z" fill="#111"/><rect x="716" y="102" width="9" height="7" fill="#444"/><path d="M718 102v-2a2.500 2.500 0 0 1 5 0v2" fill="none" stroke="#333" stroke-width="1.300"/></g>
<text x="761" y="108" font-size="11" fill="#000" textLength="14" lengthAdjust="spacingAndGlyphs" stroke="#000" stroke-width="0.25" >Fill:</text>
<rect x="779.500" y="95.500" width="30" height="15" fill="#fff" stroke="#7F9DB9"/>
<text x="782" y="107" font-size="11" fill="#000" stroke="#000" stroke-width="0.25" >100</text>
<rect x="624" y="116" width="174" height="1" fill="#C9C6B5" />
<rect x="624" y="117" width="174" height="1" fill="#FFFFFF" />
<rect x="628" y="122" width="16" height="1" fill="#A8A594" />
<rect x="628" y="122" width="1" height="16" fill="#A8A594" />
<rect x="628" y="137" width="16" height="1" fill="#FFFFFF" />
<rect x="643" y="122" width="1" height="16" fill="#FFFFFF" />
<rect x="629" y="136" width="14" height="1" fill="#F8F7F0" />
<rect x="642" y="123" width="1" height="14" fill="#F8F7F0" />
<rect x="650" y="122" width="16" height="1" fill="#A8A594" />
<rect x="650" y="122" width="1" height="16" fill="#A8A594" />
<rect x="650" y="137" width="16" height="1" fill="#FFFFFF" />
<rect x="665" y="122" width="1" height="16" fill="#FFFFFF" />
<rect x="651" y="136" width="14" height="1" fill="#F8F7F0" />
<rect x="664" y="123" width="1" height="14" fill="#F8F7F0" />
<rect x="671.5" y="119.5" width="31" height="22" fill="url(#chk)" stroke="#000"/>
<text x="707" y="132.5" font-size="11" fill="#000" textLength="69" lengthAdjust="spacingAndGlyphs" stroke="#000" stroke-width="0.25" >Layer 3 copy 2</text>
<rect x="624" y="144" width="174" height="1" fill="#C9C6B5" />
<rect x="624" y="145" width="174" height="1" fill="#FFFFFF" />
<rect x="628" y="150" width="16" height="1" fill="#A8A594" />
<rect x="628" y="150" width="1" height="16" fill="#A8A594" />
<rect x="628" y="165" width="16" height="1" fill="#FFFFFF" />
<rect x="643" y="150" width="1" height="16" fill="#FFFFFF" />
<rect x="629" y="164" width="14" height="1" fill="#F8F7F0" />
<rect x="642" y="151" width="1" height="14" fill="#F8F7F0" />
<rect x="650" y="150" width="16" height="1" fill="#A8A594" />
<rect x="650" y="150" width="1" height="16" fill="#A8A594" />
<rect x="650" y="165" width="16" height="1" fill="#FFFFFF" />
<rect x="665" y="150" width="1" height="16" fill="#FFFFFF" />
<rect x="651" y="164" width="14" height="1" fill="#F8F7F0" />
<rect x="664" y="151" width="1" height="14" fill="#F8F7F0" />
<rect x="671.5" y="147.5" width="31" height="22" fill="url(#chk)" stroke="#000"/>
<text x="707" y="160.5" font-size="11" fill="#000" textLength="58" lengthAdjust="spacingAndGlyphs" stroke="#000" stroke-width="0.25" >Layer 3 copy</text>
<rect x="624" y="172" width="174" height="1" fill="#C9C6B5" />
<rect x="624" y="173" width="174" height="1" fill="#FFFFFF" />
<rect x="628" y="178" width="16" height="1" fill="#A8A594" />
<rect x="628" y="178" width="1" height="16" fill="#A8A594" />
<rect x="628" y="193" width="16" height="1" fill="#FFFFFF" />
<rect x="643" y="178" width="1" height="16" fill="#FFFFFF" />
<rect x="629" y="192" width="14" height="1" fill="#F8F7F0" />
<rect x="642" y="179" width="1" height="14" fill="#F8F7F0" />
<rect x="650" y="178" width="16" height="1" fill="#A8A594" />
<rect x="650" y="178" width="1" height="16" fill="#A8A594" />
<rect x="650" y="193" width="16" height="1" fill="#FFFFFF" />
<rect x="665" y="178" width="1" height="16" fill="#FFFFFF" />
<rect x="651" y="192" width="14" height="1" fill="#F8F7F0" />
<rect x="664" y="179" width="1" height="14" fill="#F8F7F0" />
<rect x="671.5" y="175.5" width="31" height="22" fill="url(#chk)" stroke="#000"/>
<text x="707" y="188.5" font-size="11" fill="#000" textLength="69" lengthAdjust="spacingAndGlyphs" stroke="#000" stroke-width="0.25" >Layer 3 copy 3</text>
<rect x="624" y="200" width="174" height="1" fill="#C9C6B5" />
<rect x="624" y="201" width="174" height="1" fill="#FFFFFF" />
<rect x="628" y="206" width="16" height="1" fill="#A8A594" />
<rect x="628" y="206" width="1" height="16" fill="#A8A594" />
<rect x="628" y="221" width="16" height="1" fill="#FFFFFF" />
<rect x="643" y="206" width="1" height="16" fill="#FFFFFF" />
<rect x="629" y="220" width="14" height="1" fill="#F8F7F0" />
<rect x="642" y="207" width="1" height="14" fill="#F8F7F0" />
<rect x="650" y="206" width="16" height="1" fill="#A8A594" />
<rect x="650" y="206" width="1" height="16" fill="#A8A594" />
<rect x="650" y="221" width="16" height="1" fill="#FFFFFF" />
<rect x="665" y="206" width="1" height="16" fill="#FFFFFF" />
<rect x="651" y="220" width="14" height="1" fill="#F8F7F0" />
<rect x="664" y="207" width="1" height="14" fill="#F8F7F0" />
<rect x="671.5" y="203.5" width="31" height="22" fill="url(#chk)" stroke="#000"/>
<text x="707" y="216.5" font-size="11" fill="#000" textLength="35" lengthAdjust="spacingAndGlyphs" stroke="#000" stroke-width="0.25" >Layer 3</text>
<rect x="624" y="228" width="174" height="1" fill="#C9C6B5" />
<rect x="624" y="229" width="174" height="1" fill="#FFFFFF" />
<rect x="628" y="234" width="16" height="1" fill="#A8A594" />
<rect x="628" y="234" width="1" height="16" fill="#A8A594" />
<rect x="628" y="249" width="16" height="1" fill="#FFFFFF" />
<rect x="643" y="234" width="1" height="16" fill="#FFFFFF" />
<rect x="629" y="248" width="14" height="1" fill="#F8F7F0" />
<rect x="642" y="235" width="1" height="14" fill="#F8F7F0" />
<rect x="650" y="234" width="16" height="1" fill="#A8A594" />
<rect x="650" y="234" width="1" height="16" fill="#A8A594" />
<rect x="650" y="249" width="16" height="1" fill="#FFFFFF" />
<rect x="665" y="234" width="1" height="16" fill="#FFFFFF" />
<rect x="651" y="248" width="14" height="1" fill="#F8F7F0" />
<rect x="664" y="235" width="1" height="14" fill="#F8F7F0" />
<g shape-rendering="geometricPrecision" opacity="1"><path d="M630.0 242.8q5.500-5.500 11 0q-5.500 5-11 0z" fill="#fff" stroke="#111" stroke-width="1"/><circle cx="635.5" cy="242.60000000000002" r="2.300" fill="#111"/><circle cx="634.7" cy="241.8" r="0.700" fill="#fff"/><path d="M629.5 240.8q6-5.500 12 0" fill="none" stroke="#111" stroke-width="1.300"/></g>
<rect x="671.5" y="231.5" width="31" height="22" fill="url(#chk)" stroke="#000"/>
<text x="707" y="244.5" font-size="11" fill="#000" textLength="17" lengthAdjust="spacingAndGlyphs" stroke="#000" stroke-width="0.25" >grid</text>
<rect x="624" y="256" width="174" height="1" fill="#C9C6B5" />
<rect x="624" y="257" width="174" height="1" fill="#FFFFFF" />
<rect x="628" y="262" width="16" height="1" fill="#A8A594" />
<rect x="628" y="262" width="1" height="16" fill="#A8A594" />
<rect x="628" y="277" width="16" height="1" fill="#FFFFFF" />
<rect x="643" y="262" width="1" height="16" fill="#FFFFFF" />
<rect x="629" y="276" width="14" height="1" fill="#F8F7F0" />
<rect x="642" y="263" width="1" height="14" fill="#F8F7F0" />
<rect x="650" y="262" width="16" height="1" fill="#A8A594" />
<rect x="650" y="262" width="1" height="16" fill="#A8A594" />
<rect x="650" y="277" width="16" height="1" fill="#FFFFFF" />
<rect x="665" y="262" width="1" height="16" fill="#FFFFFF" />
<rect x="651" y="276" width="14" height="1" fill="#F8F7F0" />
<rect x="664" y="263" width="1" height="14" fill="#F8F7F0" />
<rect x="671.5" y="259.5" width="31" height="22" fill="#fff" stroke="#000"/>
<rect x="672" y="261" width="30" height="19" fill="#0A0A0A" />
<circle cx="695" cy="270.5" r="7" fill="#C8140F" shape-rendering="geometricPrecision"/>
<text x="707" y="272.5" font-size="11" fill="#000" textLength="33" lengthAdjust="spacingAndGlyphs" stroke="#000" stroke-width="0.25" >Layer 1</text>
<rect x="624" y="284" width="174" height="1" fill="#C9C6B5" />
<rect x="624" y="285" width="174" height="1" fill="#FFFFFF" />
<rect x="628" y="290" width="16" height="1" fill="#A8A594" />
<rect x="628" y="290" width="1" height="16" fill="#A8A594" />
<rect x="628" y="305" width="16" height="1" fill="#FFFFFF" />
<rect x="643" y="290" width="1" height="16" fill="#FFFFFF" />
<rect x="629" y="304" width="14" height="1" fill="#F8F7F0" />
<rect x="642" y="291" width="1" height="14" fill="#F8F7F0" />
<rect x="650" y="290" width="16" height="1" fill="#A8A594" />
<rect x="650" y="290" width="1" height="16" fill="#A8A594" />
<rect x="650" y="305" width="16" height="1" fill="#FFFFFF" />
<rect x="665" y="290" width="1" height="16" fill="#FFFFFF" />
<rect x="651" y="304" width="14" height="1" fill="#F8F7F0" />
<rect x="664" y="291" width="1" height="14" fill="#F8F7F0" />
<rect x="671.5" y="287.5" width="31" height="22" fill="#fff" stroke="#000"/>
<text x="681.5" y="304.5" font-size="17" fill="#000" font-family="Liberation Serif, serif">T</text>
<text x="707" y="300.5" font-size="11" fill="#000" textLength="94" lengthAdjust="spacingAndGlyphs" stroke="#000" stroke-width="0.25" >Copyright 2011, Haw</text>
<rect x="624" y="312" width="45" height="1" fill="#C9C6B5" />
<rect x="624" y="313" width="45" height="1" fill="#FFFFFF" />
<rect x="669" y="312" width="129" height="38" fill="#fff" />
<rect x="686" y="331" width="1" height="1" fill="#000" />
<rect x="688" y="331" width="1" height="1" fill="#000" />
<rect x="690" y="331" width="1" height="1" fill="#000" />
<rect x="692" y="331" width="1" height="1" fill="#000" />
<rect x="694" y="331" width="1" height="1" fill="#000" />
<rect x="696" y="331" width="1" height="1" fill="#000" />
<rect x="698" y="331" width="1" height="1" fill="#000" />
<rect x="700" y="331" width="1" height="1" fill="#000" />
<rect x="702" y="331" width="1" height="1" fill="#000" />
<rect x="704" y="331" width="1" height="1" fill="#000" />
<rect x="706" y="331" width="1" height="1" fill="#000" />
<rect x="708" y="331" width="1" height="1" fill="#000" />
<rect x="710" y="331" width="1" height="1" fill="#000" />
<rect x="712" y="331" width="1" height="1" fill="#000" />
<rect x="714" y="331" width="1" height="1" fill="#000" />
<rect x="716" y="331" width="1" height="1" fill="#000" />
<rect x="718" y="331" width="1" height="1" fill="#000" />
<rect x="720" y="331" width="1" height="1" fill="#000" />
<rect x="722" y="331" width="1" height="1" fill="#000" />
<rect x="724" y="331" width="1" height="1" fill="#000" />
<rect x="726" y="331" width="1" height="1" fill="#000" />
<rect x="728" y="331" width="1" height="1" fill="#000" />
<rect x="730" y="331" width="1" height="1" fill="#000" />
<rect x="732" y="331" width="1" height="1" fill="#000" />
<rect x="734" y="331" width="1" height="1" fill="#000" />
<rect x="736" y="331" width="1" height="1" fill="#000" />
<rect x="738" y="331" width="1" height="1" fill="#000" />
<rect x="740" y="331" width="1" height="1" fill="#000" />
<rect x="742" y="331" width="1" height="1" fill="#000" />
<rect x="744" y="331" width="1" height="1" fill="#000" />
<rect x="746" y="331" width="1" height="1" fill="#000" />
<rect x="748" y="331" width="1" height="1" fill="#000" />
<rect x="750" y="331" width="1" height="1" fill="#000" />
<rect x="752" y="331" width="1" height="1" fill="#000" />
<rect x="754" y="331" width="1" height="1" fill="#000" />
<rect x="756" y="331" width="1" height="1" fill="#000" />
<rect x="758" y="331" width="1" height="1" fill="#000" />
<rect x="760" y="331" width="1" height="1" fill="#000" />
<rect x="762" y="331" width="1" height="1" fill="#000" />
<rect x="764" y="331" width="1" height="1" fill="#000" />
<rect x="766" y="331" width="1" height="1" fill="#000" />
<rect x="768" y="331" width="1" height="1" fill="#000" />
<rect x="770" y="331" width="1" height="1" fill="#000" />
<rect x="772" y="331" width="1" height="1" fill="#000" />
<rect x="774" y="331" width="1" height="1" fill="#000" />
<rect x="776" y="331" width="1" height="1" fill="#000" />
<rect x="778" y="331" width="1" height="1" fill="#000" />
<rect x="780" y="331" width="1" height="1" fill="#000" />
<rect x="782" y="331" width="1" height="1" fill="#000" />
<rect x="784" y="331" width="1" height="1" fill="#000" />
<rect x="786" y="331" width="1" height="1" fill="#000" />
<rect x="788" y="331" width="1" height="1" fill="#000" />
<rect x="790" y="331" width="1" height="1" fill="#000" />
<rect x="792" y="331" width="1" height="1" fill="#000" />
<rect x="794" y="331" width="1" height="1" fill="#000" />
<rect x="796" y="331" width="1" height="1" fill="#000" />
<text x="686" y="324.5" font-size="11" fill="#000" textLength="32" lengthAdjust="spacingAndGlyphs" stroke="#000" stroke-width="0.25" >Effects</text>
<g shape-rendering="geometricPrecision"><circle cx="692" cy="340.5" r="5.800" fill="#2A2A2A"/><circle cx="691" cy="339.5" r="4" fill="#555" opacity="0.500"/></g>
<text x="690" y="344" font-size="10" fill="#fff" font-style="italic" font-weight="bold" font-family="Liberation Serif, serif">f</text>
<text x="704.5" y="344.5" font-size="11" fill="#000" textLength="58" lengthAdjust="spacingAndGlyphs" stroke="#000" stroke-width="0.25" >Drop Shadow</text>
<rect x="628" y="314" width="16" height="1" fill="#A8A594" />
<rect x="628" y="314" width="1" height="15" fill="#A8A594" />
<rect x="628" y="328" width="16" height="1" fill="#FFFFFF" />
<rect x="643" y="314" width="1" height="15" fill="#FFFFFF" />
<rect x="629" y="327" width="14" height="1" fill="#F8F7F0" />
<rect x="642" y="315" width="1" height="13" fill="#F8F7F0" />
<rect x="628" y="333" width="16" height="1" fill="#A8A594" />
<rect x="628" y="333" width="1" height="15" fill="#A8A594" />
<rect x="628" y="347" width="16" height="1" fill="#FFFFFF" />
<rect x="643" y="333" width="1" height="15" fill="#FFFFFF" />
<rect x="629" y="346" width="14" height="1" fill="#F8F7F0" />
<rect x="642" y="334" width="1" height="13" fill="#F8F7F0" />
<g shape-rendering="geometricPrecision" opacity="0.32"><path d="M630.0 322.5q5.500-5.500 11 0q-5.500 5-11 0z" fill="#fff" stroke="#111" stroke-width="1"/><circle cx="635.5" cy="322.3" r="2.300" fill="#111"/><circle cx="634.7" cy="321.5" r="0.700" fill="#fff"/><path d="M629.5 320.5q6-5.500 12 0" fill="none" stroke="#111" stroke-width="1.300"/></g>
<g shape-rendering="geometricPrecision" opacity="0.32"><path d="M630.0 341.5q5.500-5.500 11 0q-5.500 5-11 0z" fill="#fff" stroke="#111" stroke-width="1"/><circle cx="635.5" cy="341.3" r="2.300" fill="#111"/><circle cx="634.7" cy="340.5" r="0.700" fill="#fff"/><path d="M629.5 339.5q6-5.500 12 0" fill="none" stroke="#111" stroke-width="1.300"/></g>
<rect x="624" y="350" width="174" height="1" fill="#C9C6B5" />
<rect x="624" y="351" width="174" height="1" fill="#FFFFFF" />
<rect x="628" y="356" width="16" height="1" fill="#A8A594" />
<rect x="628" y="356" width="1" height="16" fill="#A8A594" />
<rect x="628" y="371" width="16" height="1" fill="#FFFFFF" />
<rect x="643" y="356" width="1" height="16" fill="#FFFFFF" />
<rect x="629" y="370" width="14" height="1" fill="#F8F7F0" />
<rect x="642" y="357" width="1" height="14" fill="#F8F7F0" />
<rect x="650" y="356" width="16" height="1" fill="#A8A594" />
<rect x="650" y="356" width="1" height="16" fill="#A8A594" />
<rect x="650" y="371" width="16" height="1" fill="#FFFFFF" />
<rect x="665" y="356" width="1" height="16" fill="#FFFFFF" />
<rect x="651" y="370" width="14" height="1" fill="#F8F7F0" />
<rect x="664" y="357" width="1" height="14" fill="#F8F7F0" />
<g shape-rendering="geometricPrecision" opacity="1"><path d="M630.0 364.8q5.500-5.500 11 0q-5.500 5-11 0z" fill="#fff" stroke="#111" stroke-width="1"/><circle cx="635.5" cy="364.6" r="2.300" fill="#111"/><circle cx="634.7" cy="363.8" r="0.700" fill="#fff"/><path d="M629.5 362.8q6-5.500 12 0" fill="none" stroke="#111" stroke-width="1.300"/></g>
<rect x="671.5" y="353.5" width="31" height="22" fill="#fff" stroke="#000"/>
<text x="681.5" y="370.5" font-size="17" fill="#000" font-family="Liberation Serif, serif">T</text>
<text x="707" y="366.5" font-size="11" fill="#000" textLength="94" lengthAdjust="spacingAndGlyphs" stroke="#000" stroke-width="0.25" >www.flickr.com/phot</text>
<rect x="624" y="378" width="174" height="1" fill="#C9C6B5" />
<rect x="624" y="379" width="174" height="1" fill="#FFFFFF" />
<rect x="628" y="384" width="16" height="1" fill="#A8A594" />
<rect x="628" y="384" width="1" height="16" fill="#A8A594" />
<rect x="628" y="399" width="16" height="1" fill="#FFFFFF" />
<rect x="643" y="384" width="1" height="16" fill="#FFFFFF" />
<rect x="629" y="398" width="14" height="1" fill="#F8F7F0" />
<rect x="642" y="385" width="1" height="14" fill="#F8F7F0" />
<rect x="650" y="384" width="16" height="1" fill="#A8A594" />
<rect x="650" y="384" width="1" height="16" fill="#A8A594" />
<rect x="650" y="399" width="16" height="1" fill="#FFFFFF" />
<rect x="665" y="384" width="1" height="16" fill="#FFFFFF" />
<rect x="651" y="398" width="14" height="1" fill="#F8F7F0" />
<rect x="664" y="385" width="1" height="14" fill="#F8F7F0" />
<g shape-rendering="geometricPrecision" opacity="1"><path d="M630.0 392.8q5.500-5.500 11 0q-5.500 5-11 0z" fill="#fff" stroke="#111" stroke-width="1"/><circle cx="635.5" cy="392.6" r="2.300" fill="#111"/><circle cx="634.7" cy="391.8" r="0.700" fill="#fff"/><path d="M629.5 390.8q6-5.500 12 0" fill="none" stroke="#111" stroke-width="1.300"/></g>
<rect x="671.5" y="381.5" width="31" height="22" fill="#fff" stroke="#000"/>
<text x="681.5" y="398.5" font-size="17" fill="#000" font-family="Liberation Serif, serif">T</text>
<text x="707" y="394.5" font-size="11" fill="#000" textLength="91" lengthAdjust="spacingAndGlyphs" stroke="#000" stroke-width="0.25" >http://ahradwani.co</text>
<rect x="624" y="406" width="174" height="1" fill="#C9C6B5" />
<rect x="624" y="407" width="174" height="1" fill="#FFFFFF" />
<rect x="669" y="407" width="129" height="27" fill="#316AC5" />
<rect x="628" y="412" width="16" height="1" fill="#A8A594" />
<rect x="628" y="412" width="1" height="16" fill="#A8A594" />
<rect x="628" y="427" width="16" height="1" fill="#FFFFFF" />
<rect x="643" y="412" width="1" height="16" fill="#FFFFFF" />
<rect x="629" y="426" width="14" height="1" fill="#F8F7F0" />
<rect x="642" y="413" width="1" height="14" fill="#F8F7F0" />
<rect x="650" y="412" width="16" height="1" fill="#A8A594" />
<rect x="650" y="412" width="1" height="16" fill="#A8A594" />
<rect x="650" y="427" width="16" height="1" fill="#FFFFFF" />
<rect x="665" y="412" width="1" height="16" fill="#FFFFFF" />
<rect x="651" y="426" width="14" height="1" fill="#F8F7F0" />
<rect x="664" y="413" width="1" height="14" fill="#F8F7F0" />
<g shape-rendering="geometricPrecision" opacity="1"><path d="M630.0 420.8q5.500-5.500 11 0q-5.500 5-11 0z" fill="#fff" stroke="#111" stroke-width="1"/><circle cx="635.5" cy="420.6" r="2.300" fill="#111"/><circle cx="634.7" cy="419.8" r="0.700" fill="#fff"/><path d="M629.5 418.8q6-5.500 12 0" fill="none" stroke="#111" stroke-width="1.300"/></g>
<rect x="670.5" y="407.5" width="33" height="25" fill="#fff" stroke="#fff"/>
<rect x="671.5" y="408.5" width="31" height="23" fill="#fff" stroke="#316AC5"/>
<path d="M674 410.5l27-.8v17l-27 .8z" fill="#0A0A0A" shape-rendering="geometricPrecision"/>
<circle cx="687" cy="419.5" r="7" fill="#C8140F" shape-rendering="geometricPrecision"/>
<g shape-rendering="geometricPrecision"><path d="M652.500 426q1-3.500 4-5l6-7 1.500 1.200-5 7.500q-.5 4-6.500 3.300z" fill="#AAA" stroke="#333" stroke-width="0.800"/><path d="M659 418l4-4.500 1 .8-3.500 5z" fill="#333"/></g>
<text x="707" y="422.5" font-size="11" fill="#fff" textLength="58" lengthAdjust="spacingAndGlyphs" font-weight="bold">24_9_2011</text>
<rect x="624" y="434" width="174" height="1" fill="#C9C6B5" />
<rect x="624" y="435" width="174" height="1" fill="#FFFFFF" />
<rect x="628" y="440" width="16" height="1" fill="#A8A594" />
<rect x="628" y="440" width="1" height="16" fill="#A8A594" />
<rect x="628" y="455" width="16" height="1" fill="#FFFFFF" />
<rect x="643" y="440" width="1" height="16" fill="#FFFFFF" />
<rect x="629" y="454" width="14" height="1" fill="#F8F7F0" />
<rect x="642" y="441" width="1" height="14" fill="#F8F7F0" />
<rect x="650" y="440" width="16" height="1" fill="#A8A594" />
<rect x="650" y="440" width="1" height="16" fill="#A8A594" />
<rect x="650" y="455" width="16" height="1" fill="#FFFFFF" />
<rect x="665" y="440" width="1" height="16" fill="#FFFFFF" />
<rect x="651" y="454" width="14" height="1" fill="#F8F7F0" />
<rect x="664" y="441" width="1" height="14" fill="#F8F7F0" />
<rect x="671.5" y="437.5" width="31" height="22" fill="url(#chk)" stroke="#000"/>
<rect x="677" y="438" width="20" height="21" fill="#0A0A0A" />
<circle cx="687" cy="448.5" r="7" fill="#B81C14" shape-rendering="geometricPrecision"/>
<text x="707" y="450.5" font-size="11" fill="#000" textLength="49" lengthAdjust="spacingAndGlyphs" stroke="#000" stroke-width="0.25" >23_9_2011</text>
<rect x="624" y="462" width="174" height="1" fill="#C9C6B5" />
<rect x="624" y="463" width="174" height="1" fill="#FFFFFF" />
<rect x="628" y="468" width="16" height="1" fill="#A8A594" />
<rect x="628" y="468" width="1" height="16" fill="#A8A594" />
<rect x="628" y="483" width="16" height="1" fill="#FFFFFF" />
<rect x="643" y="468" width="1" height="16" fill="#FFFFFF" />
<rect x="629" y="482" width="14" height="1" fill="#F8F7F0" />
<rect x="642" y="469" width="1" height="14" fill="#F8F7F0" />
<rect x="650" y="468" width="16" height="1" fill="#A8A594" />
<rect x="650" y="468" width="1" height="16" fill="#A8A594" />
<rect x="650" y="483" width="16" height="1" fill="#FFFFFF" />
<rect x="665" y="468" width="1" height="16" fill="#FFFFFF" />
<rect x="651" y="482" width="14" height="1" fill="#F8F7F0" />
<rect x="664" y="469" width="1" height="14" fill="#F8F7F0" />
<rect x="671.5" y="465.5" width="31" height="22" fill="url(#chk)" stroke="#000"/>
<rect x="677" y="466" width="20" height="21" fill="#0A0A0A" />
<circle cx="687" cy="476.5" r="7" fill="#B81C14" shape-rendering="geometricPrecision"/>
<text x="707" y="478.5" font-size="11" fill="#000" textLength="49" lengthAdjust="spacingAndGlyphs" stroke="#000" stroke-width="0.25" >22_9_2011</text>
<rect x="624" y="490" width="174" height="1" fill="#C9C6B5" />
<rect x="624" y="491" width="174" height="1" fill="#FFFFFF" />
<rect x="628" y="496" width="16" height="1" fill="#A8A594" />
<rect x="628" y="496" width="1" height="16" fill="#A8A594" />
<rect x="628" y="511" width="16" height="1" fill="#FFFFFF" />
<rect x="643" y="496" width="1" height="16" fill="#FFFFFF" />
<rect x="629" y="510" width="14" height="1" fill="#F8F7F0" />
<rect x="642" y="497" width="1" height="14" fill="#F8F7F0" />
<rect x="650" y="496" width="16" height="1" fill="#A8A594" />
<rect x="650" y="496" width="1" height="16" fill="#A8A594" />
<rect x="650" y="511" width="16" height="1" fill="#FFFFFF" />
<rect x="665" y="496" width="1" height="16" fill="#FFFFFF" />
<rect x="651" y="510" width="14" height="1" fill="#F8F7F0" />
<rect x="664" y="497" width="1" height="14" fill="#F8F7F0" />
<rect x="671.5" y="493.5" width="31" height="22" fill="url(#chk)" stroke="#000"/>
<rect x="677" y="494" width="20" height="21" fill="#0A0A0A" />
<circle cx="687" cy="504.5" r="7" fill="#B81C14" shape-rendering="geometricPrecision"/>
<text x="707" y="506.5" font-size="11" fill="#000" textLength="48" lengthAdjust="spacingAndGlyphs" stroke="#000" stroke-width="0.25" >21_9_2011</text>
<rect x="624" y="518" width="174" height="1" fill="#C9C6B5" />
<rect x="624" y="519" width="174" height="1" fill="#FFFFFF" />
<rect x="628" y="524" width="16" height="1" fill="#A8A594" />
<rect x="628" y="524" width="1" height="16" fill="#A8A594" />
<rect x="628" y="539" width="16" height="1" fill="#FFFFFF" />
<rect x="643" y="524" width="1" height="16" fill="#FFFFFF" />
<rect x="629" y="538" width="14" height="1" fill="#F8F7F0" />
<rect x="642" y="525" width="1" height="14" fill="#F8F7F0" />
<rect x="650" y="524" width="16" height="1" fill="#A8A594" />
<rect x="650" y="524" width="1" height="16" fill="#A8A594" />
<rect x="650" y="539" width="16" height="1" fill="#FFFFFF" />
<rect x="665" y="524" width="1" height="16" fill="#FFFFFF" />
<rect x="651" y="538" width="14" height="1" fill="#F8F7F0" />
<rect x="664" y="525" width="1" height="14" fill="#F8F7F0" />
<rect x="671.5" y="521.5" width="31" height="22" fill="url(#chk)" stroke="#000"/>
<rect x="677" y="522" width="20" height="21" fill="#0A0A0A" />
<circle cx="687" cy="532.5" r="7" fill="#B81C14" shape-rendering="geometricPrecision"/>
<text x="707" y="534.5" font-size="11" fill="#000" textLength="49" lengthAdjust="spacingAndGlyphs" stroke="#000" stroke-width="0.25" >20_9_2011</text>
<rect x="624" y="546" width="174" height="1" fill="#C9C6B5" />
<rect x="624" y="547" width="174" height="1" fill="#FFFFFF" />
<rect x="628" y="552" width="16" height="1" fill="#A8A594" />
<rect x="628" y="552" width="1" height="16" fill="#A8A594" />
<rect x="628" y="567" width="16" height="1" fill="#FFFFFF" />
<rect x="643" y="552" width="1" height="16" fill="#FFFFFF" />
<rect x="629" y="566" width="14" height="1" fill="#F8F7F0" />
<rect x="642" y="553" width="1" height="14" fill="#F8F7F0" />
<rect x="650" y="552" width="16" height="1" fill="#A8A594" />
<rect x="650" y="552" width="1" height="16" fill="#A8A594" />
<rect x="650" y="567" width="16" height="1" fill="#FFFFFF" />
<rect x="665" y="552" width="1" height="16" fill="#FFFFFF" />
<rect x="651" y="566" width="14" height="1" fill="#F8F7F0" />
<rect x="664" y="553" width="1" height="14" fill="#F8F7F0" />
<rect x="671.5" y="549.5" width="31" height="22" fill="url(#chk)" stroke="#000"/>
<rect x="677" y="550" width="20" height="21" fill="#0A0A0A" />
<circle cx="687" cy="560.5" r="7" fill="#B81C14" shape-rendering="geometricPrecision"/>
<text x="707" y="562.5" font-size="11" fill="#000" textLength="48" lengthAdjust="spacingAndGlyphs" stroke="#000" stroke-width="0.25" >19_9_2011</text>
<rect x="624" y="574" width="174" height="1" fill="#C9C6B5" />
<rect x="624" y="575" width="174" height="1" fill="#FFFFFF" />
<rect x="628" y="580" width="16" height="1" fill="#A8A594" />
<rect x="628" y="580" width="1" height="16" fill="#A8A594" />
<rect x="628" y="595" width="16" height="1" fill="#FFFFFF" />
<rect x="643" y="580" width="1" height="16" fill="#FFFFFF" />
<rect x="629" y="594" width="14" height="1" fill="#F8F7F0" />
<rect x="642" y="581" width="1" height="14" fill="#F8F7F0" />
<rect x="650" y="580" width="16" height="1" fill="#A8A594" />
<rect x="650" y="580" width="1" height="16" fill="#A8A594" />
<rect x="650" y="595" width="16" height="1" fill="#FFFFFF" />
<rect x="665" y="580" width="1" height="16" fill="#FFFFFF" />
<rect x="651" y="594" width="14" height="1" fill="#F8F7F0" />
<rect x="664" y="581" width="1" height="14" fill="#F8F7F0" />
<rect x="671.5" y="577.5" width="31" height="22" fill="#fff" stroke="#000"/>
<text x="681.5" y="594.5" font-size="17" fill="#000" font-family="Liberation Serif, serif">T</text>
<text x="707" y="590.5" font-size="11" fill="#000" textLength="48" lengthAdjust="spacingAndGlyphs" stroke="#000" stroke-width="0.25" >18_9_2011</text>
<rect x="624" y="602" width="174" height="1" fill="#C9C6B5" />
<rect x="624" y="603" width="174" height="1" fill="#FFFFFF" />
<rect x="628" y="608" width="16" height="1" fill="#A8A594" />
<rect x="628" y="608" width="1" height="16" fill="#A8A594" />
<rect x="628" y="623" width="16" height="1" fill="#FFFFFF" />
<rect x="643" y="608" width="1" height="16" fill="#FFFFFF" />
<rect x="629" y="622" width="14" height="1" fill="#F8F7F0" />
<rect x="642" y="609" width="1" height="14" fill="#F8F7F0" />
<rect x="650" y="608" width="16" height="1" fill="#A8A594" />
<rect x="650" y="608" width="1" height="16" fill="#A8A594" />
<rect x="650" y="623" width="16" height="1" fill="#FFFFFF" />
<rect x="665" y="608" width="1" height="16" fill="#FFFFFF" />
<rect x="651" y="622" width="14" height="1" fill="#F8F7F0" />
<rect x="664" y="609" width="1" height="14" fill="#F8F7F0" />
<rect x="671.5" y="605.5" width="31" height="22" fill="url(#chk)" stroke="#000"/>
<rect x="677" y="606" width="20" height="21" fill="#0A0A0A" />
<circle cx="687" cy="616.5" r="7" fill="#B81C14" shape-rendering="geometricPrecision"/>
<text x="707" y="618.5" font-size="11" fill="#000" textLength="48" lengthAdjust="spacingAndGlyphs" stroke="#000" stroke-width="0.25" >18_9_2011</text>
<rect x="646" y="117" width="1" height="499" fill="#C9C6B5" />
<rect x="647" y="117" width="1" height="499" fill="#FFFFFF" />
<rect x="668" y="116" width="1" height="500" fill="#000" />
<rect x="624" y="116" width="174" height="1" fill="#000" />
<rect x="636.500" y="461.500" width="119" height="16" fill="#FFFFE1" stroke="#000"/>
<text x="639" y="473.5" font-size="11" fill="#000" textLength="110" lengthAdjust="spacingAndGlyphs" stroke="#000" stroke-width="0.25" >Indicates layer visibility</text>
</g>
</svg>
</body></html>
